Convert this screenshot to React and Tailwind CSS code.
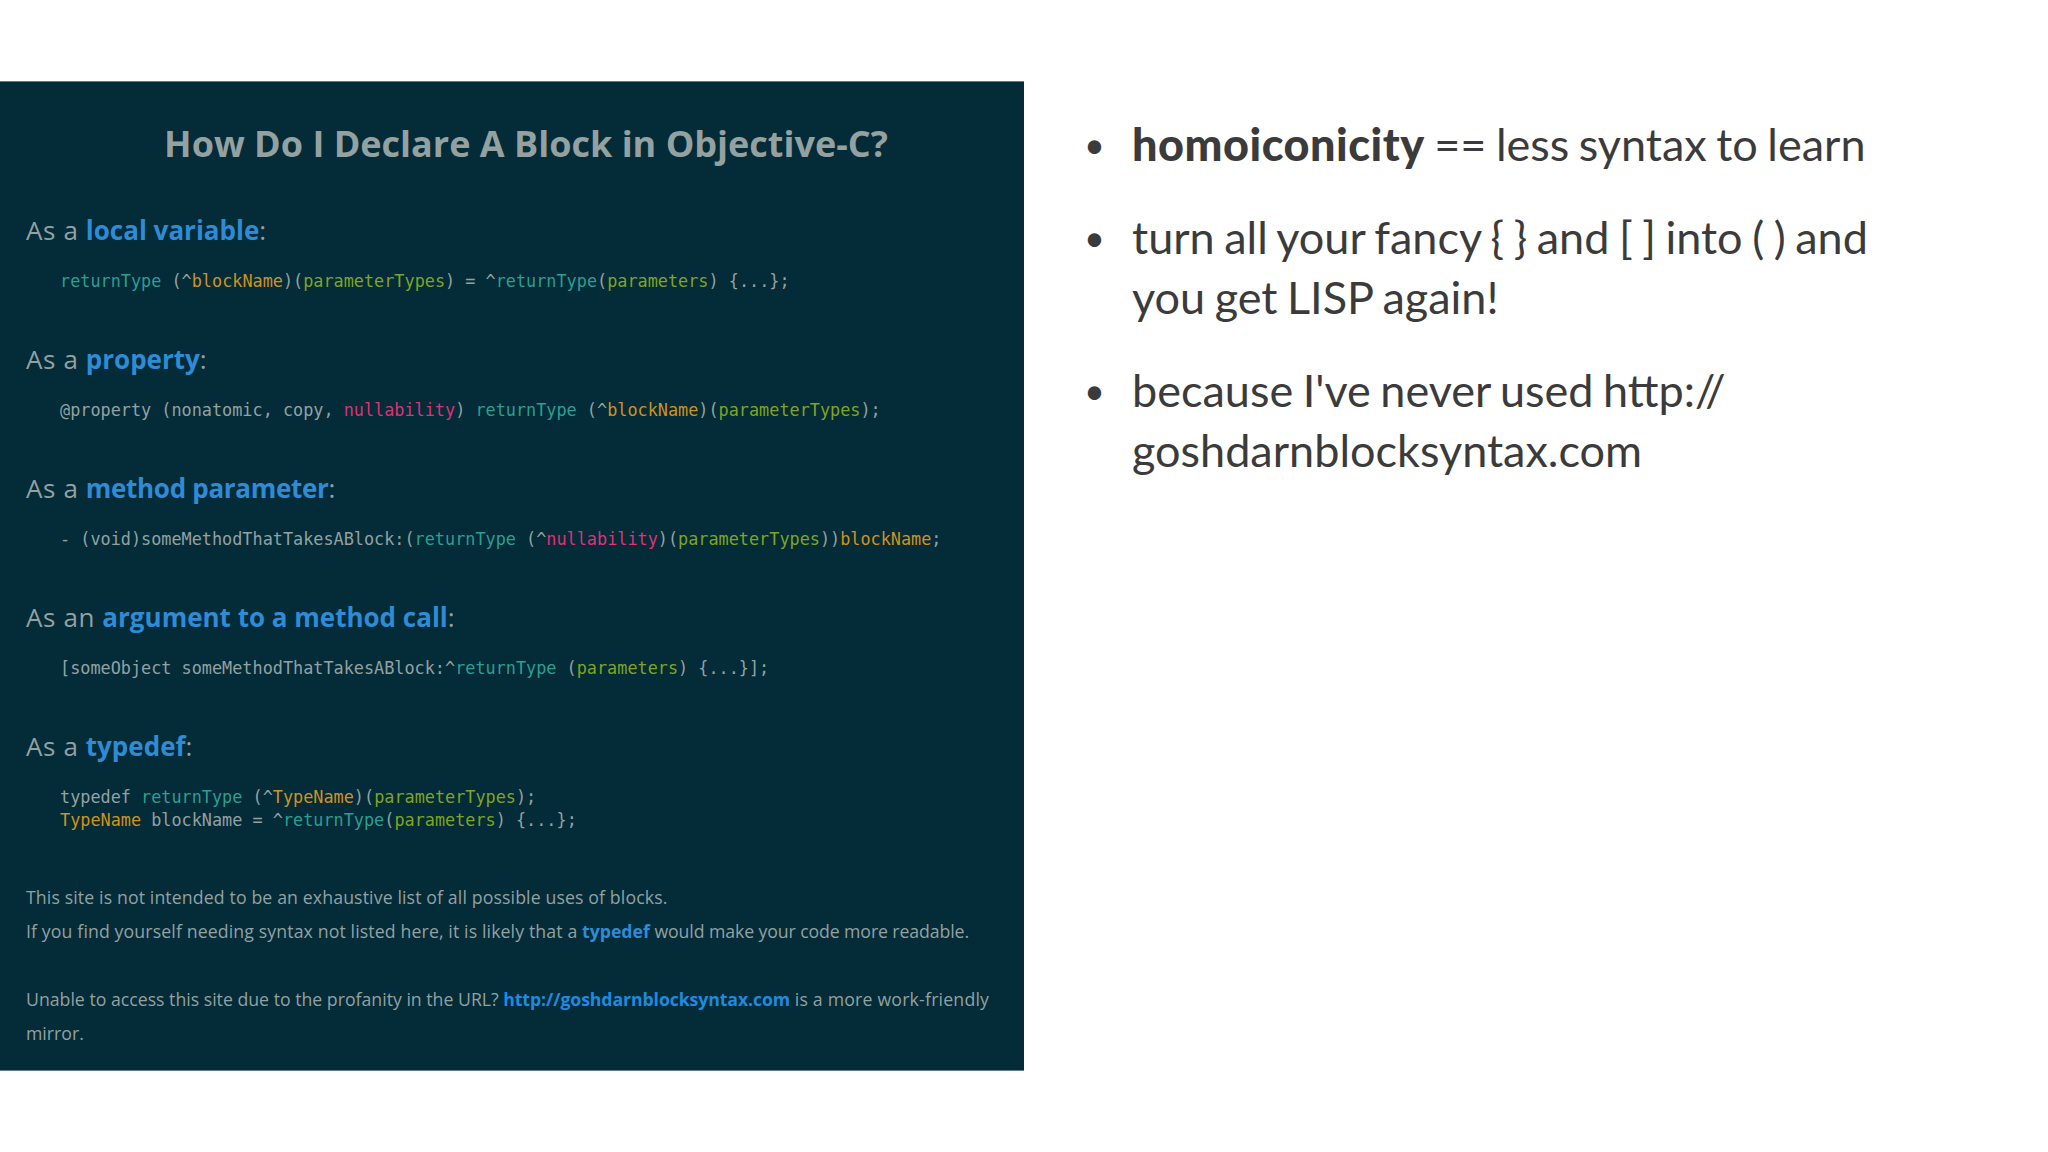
const sans = "font-['Open_Sans',sans-serif]";
const mono = "font-['DejaVu_Sans_Mono',monospace]";

const Type = ({ children }) => <span className="text-[#2a9f92]">{children}</span>;
const Name = ({ children }) => <span className="text-[#cf921f]">{children}</span>;
const Param = ({ children }) => <span className="text-[#7fa322]">{children}</span>;
const Null = ({ children }) => <span className="text-[#de3276]">{children}</span>;
const Blue = ({ children }) => <span className="font-bold tracking-normal text-[#2f8bd6]">{children}</span>;

const Section = ({ heading, children }) => (
  <section className="mb-[48px]">
    <h2 className="mb-[22px] text-[26px] leading-[36px] tracking-[0.6px] text-[#93a1a1]">{heading}</h2>
    <div className={`pl-[34px] text-[16.84px] leading-[23px] whitespace-pre text-[#93a1a1] ${mono}`}>{children}</div>
  </section>
);

const Bullet = () => <span className="w-[48px] shrink-0 text-[36px]">•</span>;

export default function App() {
  return (
    <div className="flex h-[1152px] w-[2048px] items-start overflow-hidden bg-white">
      <div className={`mt-[81px] h-[990px] w-[1024px] shrink-0 border-y border-[#5f7f88] bg-[#032b38] pl-[26px] pr-[26px] pt-[39px] ${sans}`}>
        <h1 className="mb-[45px] pl-[28px] text-center text-[36px] font-bold leading-[46px] text-[#93a1a1]">
          How Do I Declare A Block in Objective-C?
        </h1>
        <Section heading={<>As a <Blue>local variable</Blue>:</>}>
          <Type>returnType</Type> (^<Name>blockName</Name>)(<Param>parameterTypes</Param>) = ^<Type>returnType</Type>(<Param>parameters</Param>) {"{...};"}
        </Section>
        <Section heading={<>As a <Blue>property</Blue>:</>}>
          @property (nonatomic, copy, <Null>nullability</Null>) <Type>returnType</Type> (^<Name>blockName</Name>)(<Param>parameterTypes</Param>);
        </Section>
        <Section heading={<>As a <span className="font-bold tracking-[-0.3px] text-[#2f8bd6]">method parameter</span>:</>}>
          - (void)someMethodThatTakesABlock:(<Type>returnType</Type> (^<Null>nullability</Null>)(<Param>parameterTypes</Param>))<Name>blockName</Name>;
        </Section>
        <Section heading={<>As an <Blue>argument to a method call</Blue>:</>}>
          [someObject someMethodThatTakesABlock:^<Type>returnType</Type> (<Param>parameters</Param>) {"{...}];"}
        </Section>
        <Section heading={<>As a <Blue>typedef</Blue>:</>}>
          typedef <Type>returnType</Type> (^<Name>TypeName</Name>)(<Param>parameterTypes</Param>);
          {"\n"}
          <Name>TypeName</Name> blockName = ^<Type>returnType</Type>(<Param>parameters</Param>) {"{...};"}
        </Section>
        <div className="text-[17.7px] leading-[34px] text-[#93a1a1]">
          <p className="tracking-[0.125px]">This site is not intended to be an exhaustive list of all possible uses of blocks.</p>
          <p className="mb-[34px]"><span className="tracking-[0.125px]">If you find yourself needing syntax not listed here, it is likely that a</span> <Blue>typedef</Blue> <span className="tracking-[-0.1px]">would make your code more readable.</span></p>
          <p>Unable to access this site due to the profanity in the URL? <span className="font-bold tracking-[-0.1px] text-[#1f8ade]">http://goshdarnblocksyntax.com</span> <span className="tracking-[0.2px]">is a more work-friendly</span> mirror.</p>
        </div>
      </div>
      <ul className="ml-[60px] mt-[114px] w-[840px] font-['Lato',sans-serif] text-[45px] leading-[60px] text-[#3b3b3b] [word-spacing:-2px]">
        <li className="mb-[33px] flex">
          <Bullet />
          <span><b className="font-black tracking-[0.5px]">homoiconicity</b> == less syntax to learn</span>
        </li>
        <li className="mb-[33px] flex">
          <Bullet />
          <span>turn all your fancy {"{ }"} and [ ] into ( ) and<br />you get LISP again!</span>
        </li>
        <li className="flex">
          <Bullet />
          <span>because I've never used http://<br />goshdarnblocksyntax.com</span>
        </li>
      </ul>
    </div>
  );
}
